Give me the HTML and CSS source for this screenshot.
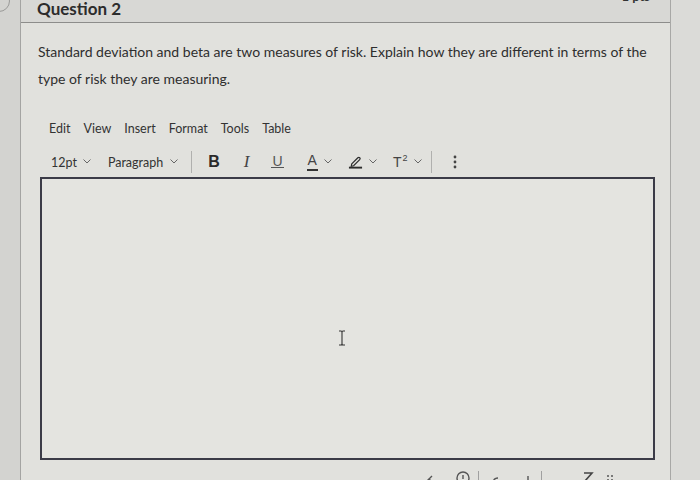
FILE: index.html
```html
<!DOCTYPE html>
<html>
<head>
<meta charset="utf-8">
<link rel="stylesheet" href="styles.css">
</head>
<body>
<div class="page">
  <div class="rail-left"><span class="arc"></span></div>
  <div class="main">
    <div class="header">
      <span class="qtitle">Question 2</span>
      <span class="pts">1 pts</span>
    </div>
    <div class="content">
      <p class="qtext">Standard deviation and beta are two measures of risk. Explain how they are different in terms of the type of risk they are measuring.</p>
      <div class="menubar">
        <span>Edit</span><span>View</span><span>Insert</span><span>Format</span><span>Tools</span><span>Table</span>
      </div>
      <div class="toolbar">
        <span class="tb-drop tb-size">12pt <svg class="chev" viewBox="0 0 8 5"><path d="M0.5 0.5 L4 4 L7.5 0.5" /></svg></span>
        <span class="tb-drop tb-para">Paragraph <svg class="chev" viewBox="0 0 8 5"><path d="M0.5 0.5 L4 4 L7.5 0.5" /></svg></span>
        <span class="sep"></span>
        <span class="tb-b">B</span>
        <span class="tb-i">I</span>
        <span class="tb-u">U</span>
        <span class="tb-a"><span class="a-letter">A</span><svg class="chev" viewBox="0 0 8 5"><path d="M0.5 0.5 L4 4 L7.5 0.5" /></svg></span>
        <span class="tb-pen"><svg viewBox="0 0 16 14" class="pen"><path d="M4 9 L10.5 2.5 Q11.5 1.5 12.5 2.5 Q13.5 3.5 12.5 4.5 L6 11 L3.5 11.5 Z" fill="none" stroke="#2c2c2c" stroke-width="1.3"/><rect x="1" y="12" width="14" height="2" fill="#2c2c2c"/></svg><svg class="chev" viewBox="0 0 8 5"><path d="M0.5 0.5 L4 4 L7.5 0.5" /></svg></span>
        <span class="tb-sup"><span class="tsup">T<sup>2</sup></span><svg class="chev" viewBox="0 0 8 5"><path d="M0.5 0.5 L4 4 L7.5 0.5" /></svg></span>
        <span class="sep sep2"></span>
        <span class="tb-more"><svg viewBox="0 0 4 14"><circle cx="2" cy="2" r="1.4"/><circle cx="2" cy="7" r="1.4"/><circle cx="2" cy="12" r="1.4"/></svg></span>
      </div>
      <div class="editor"></div>
      <div class="statusbar">
        <svg class="st st1" viewBox="0 0 14 10"><path d="M2 9 L7 4 L12 9 M7 4 L10 1" fill="none" stroke="#555" stroke-width="1.4"/></svg>
        <svg class="st st2" viewBox="0 0 14 14"><circle cx="7" cy="7" r="6" fill="none" stroke="#555" stroke-width="1.4"/><path d="M7 4 V8" stroke="#555" stroke-width="1.4"/></svg>
        <span class="st-sep"></span>
        <svg class="st st3" viewBox="0 0 10 10"><path d="M2 9 Q2 3 7 3" fill="none" stroke="#555" stroke-width="1.4"/></svg>
        <svg class="st st4" viewBox="0 0 6 10"><path d="M3 2 V10" stroke="#555" stroke-width="1.4"/></svg>
        <span class="st-sep"></span>
        <svg class="st st5" viewBox="0 0 6 10"><path d="M3 4 V10" stroke="#555" stroke-width="1.4"/></svg>
        <svg class="st st6" viewBox="0 0 12 12"><path d="M2 2 H10 L3 10" fill="none" stroke="#444" stroke-width="1.6"/></svg>
        <svg class="st st7" viewBox="0 0 8 8"><circle cx="2" cy="2" r="1"/><circle cx="6" cy="2" r="1"/><circle cx="2" cy="6" r="1"/><circle cx="6" cy="6" r="1"/></svg>
      </div>
    </div>
  </div>
  <div class="rail-right"></div>
</div>
<svg class="ibeam" viewBox="0 0 10 16"><path d="M2 1 H4 Q5 1 5 2.5 Q5 1 6 1 H8 M5 2.5 V13.5 M2 15 H4 Q5 15 5 13.5 Q5 15 6 15 H8" fill="none" stroke="#333" stroke-width="1.1"/></svg>
</body>
</html>
```

FILE: styles.css
```css
html, body {
  margin: 0;
  padding: 0;
}
body {
  width: 700px;
  height: 480px;
  overflow: hidden;
  background: #dfdfdb;
  font-family: Lato, "Open Sans", "Liberation Sans", sans-serif;
  color: #2e2e2e;
  position: relative;
}
.page {
  display: flex;
  height: 480px;
  overflow: hidden;
}
.rail-left {
  width: 20px;
  flex: none;
  background: #d3d3d0;
  border-right: 1px solid #a4a4a2;
  position: relative;
  overflow: hidden;
}
.arc {
  position: absolute;
  left: -12px;
  top: -10px;
  width: 20px;
  height: 20px;
  border: 1px solid #9a9a98;
  border-radius: 50%;
}
.main {
  width: 649px;
  flex: none;
  border-right: 1px solid #a8a8a6;
  display: flex;
  flex-direction: column;
  overflow: hidden;
}
.rail-right {
  flex: 1;
  background: #dbdbd8;
}
.header {
  flex: none;
  height: 22px;
  border-bottom: 1px solid #8d8d8b;
  background: #d8d8d5;
  display: flex;
  justify-content: space-between;
  align-items: flex-start;
  padding: 0 20px 0 16px;
  overflow: hidden;
}
.qtitle {
  font-size: 17px;
  font-weight: 700;
  line-height: 18px;
  margin-top: 0;
  color: #2c2c2c;
}
.pts {
  font-size: 13px;
  font-weight: 700;
  line-height: 13px;
  margin-top: -10px;
  color: #333;
}
.content {
  flex: none;
  background: #e1e1dd;
  padding: 0 0 0 17px;
}
.qtext {
  margin: 15px 0 0 0;
  width: 615px;
  font-size: 14px;
  line-height: 27px;
  color: #2e2e2e;
}
.menubar {
  margin-top: 29px;
  margin-left: 11px;
  display: flex;
  gap: 13px;
  font-size: 12.5px;
  line-height: 16px;
  color: #333;
}
.toolbar {
  margin-top: 13px;
  margin-left: 13px;
  height: 24px;
  display: flex;
  align-items: center;
  font-size: 12.5px;
  color: #333;
}
.chev {
  width: 8px;
  height: 5px;
  fill: none;
  stroke: #666;
  stroke-width: 1;
  margin-left: 6px;
  margin-bottom: 2px;
}
.tb-drop {
  display: flex;
  align-items: center;
}
.tb-size {
  margin-right: 17px;
}
.tb-para .chev {
  margin-left: 7px;
}
.sep {
  width: 1px;
  height: 22px;
  background: #b0b0ae;
  margin: 0 16px 0 13px;
}
.tb-b {
  font-family: "Liberation Sans", Arial, sans-serif;
  font-weight: 700;
  font-size: 16px;
  color: #2a2a2a;
  margin-right: 24px;
}
.tb-i {
  font-family: "Liberation Serif", serif;
  font-style: italic;
  font-size: 17px;
  color: #444;
  margin-right: 22px;
}
.tb-u {
  font-family: "Liberation Sans", Arial, sans-serif;
  font-size: 14px;
  color: #555;
  border-bottom: 1.5px solid #555;
  line-height: 11px;
  padding: 0 1px;
  margin-right: 23px;
}
.tb-a {
  display: flex;
  align-items: center;
  font-family: "Liberation Sans", Arial, sans-serif;
  font-size: 14px;
  color: #444;
  margin-right: 16px;
}
.a-letter {
  line-height: 13px;
  padding: 0 1px 2px;
  border-bottom: 2px solid #333;
}
.tb-pen {
  display: flex;
  align-items: center;
  margin-right: 16px;
}
.pen {
  width: 15px;
  height: 14px;
}
.tb-sup {
  display: flex;
  align-items: center;
  font-family: "Liberation Sans", Arial, sans-serif;
  font-size: 14px;
  color: #444;
}
.tsup sup {
  font-size: 9px;
  line-height: 0;
  vertical-align: 6px;
  margin-left: 1px;
}
.sep2 {
  margin: 0 21px 0 9px;
}
.tb-more svg {
  width: 4px;
  height: 14px;
  fill: #444;
  display: block;
}
.editor {
  margin-top: 3px;
  margin-left: 2px;
  width: 611px;
  height: 279px;
  border: 2px solid #3b3b47;
  background: #e4e4e0;
}
.statusbar {
  height: 20px;
  margin-top: 6px;
  width: 620px;
  display: flex;
  align-items: flex-start;
  padding-left: 384px;
  box-sizing: border-box;
  position: relative;
}
.st {
  flex: none;
  margin-top: 6px;
}
.st1 { width: 14px; height: 10px; margin-top: 9px; margin-right: 20px; }
.st2 { width: 14px; height: 14px; margin-top: 5px; margin-right: 8px; }
.st-sep {
  width: 1px;
  height: 14px;
  background: #a0a0a0;
  margin-top: 5px;
  margin-right: 12px;
}
.st3 { width: 10px; height: 10px; margin-top: 9px; margin-right: 24px; }
.st4 { width: 6px; height: 10px; margin-top: 8px; margin-right: 10px; }
.st5 { width: 6px; height: 10px; margin-top: 10px; margin-right: 22px; }
.st6 { width: 12px; height: 12px; margin-top: 5px; margin-right: 12px; }
.st7 { width: 8px; height: 8px; margin-top: 8px; fill: #555; }
.ibeam {
  position: absolute;
  left: 337px;
  top: 330px;
  width: 10px;
  height: 16px;
}
```
